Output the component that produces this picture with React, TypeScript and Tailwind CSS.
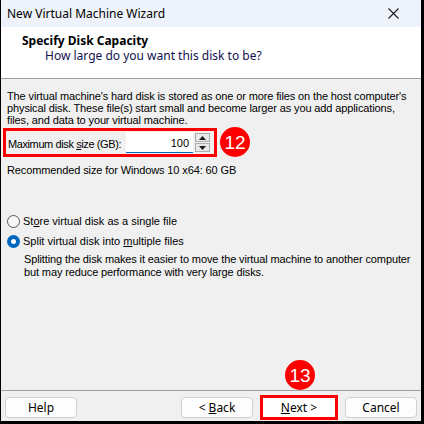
import React from "react";

const ui = { fontFamily: '"Noto Sans", "Open Sans", sans-serif' };
const body = { fontFamily: '"Liberation Sans", Arial, sans-serif' };

function Badge({ n }: { n: string }) {
    return (
        <div
            className="w-[30px] h-[30px] rounded-full bg-[#ff0000] text-white flex items-center justify-center text-[19px] leading-none"
            style={{ fontFamily: '"Liberation Sans", Arial, sans-serif' }}
        >
            {n}
        </div>
    );
}

function Radio({ checked }: { checked?: boolean }) {
    if (checked) {
        return (
            <span className="w-[13px] h-[13px] rounded-full bg-[#0067c0] flex items-center justify-center">
                <span className="w-[5px] h-[5px] rounded-full bg-white" />
            </span>
        );
    }
    return <span className="w-[13px] h-[13px] rounded-full border border-[#5a5a5a] bg-[#f7f7f7]" />;
}

function Button({ children }: { children: React.ReactNode }) {
    return (
        <button
            className="w-[72px] h-[21px] rounded-[4px] border border-[#cfcfcf] bg-[#fdfdfd] text-[12px] leading-none text-black flex items-center justify-center"
            style={ui}
        >
            {children}
        </button>
    );
}

export default function App() {
    return (
        <div className="relative w-[424px] h-[424px] bg-black flex flex-col border-l border-r-[3px] border-b-[3px] border-black">
            {/* title bar */}
            <div className="h-[27px] bg-[#eef2fa] flex items-center justify-between pl-[6px] pr-[22px]">
                <span className="text-[12px] text-black" style={ui}>
                    New Virtual Machine Wizard
                </span>
                <svg width="11" height="11" viewBox="0 0 11 11">
                    <path d="M0.5 0.5 L10.5 10.5 M10.5 0.5 L0.5 10.5" stroke="#1a1a1a" strokeWidth="1.1" />
                </svg>
            </div>

            {/* header */}
            <div className="h-[52px] bg-white border-b border-[#a0a0a0] pl-[21px] pt-[6px]">
                <div className="text-[12px] font-bold leading-[15px] text-black" style={ui}>
                    Specify Disk Capacity
                </div>
                <div className="text-[12px] leading-[15px] text-[#111150] pl-[23px]" style={ui}>
                    How large do you want this disk to be?
                </div>
            </div>

            {/* body */}
            <div className="flex-1 bg-[#f0f0f0] text-[11px] leading-[12px] text-black whitespace-nowrap" style={body}>
                <p className="pl-[6px] pt-[11px] tracking-[-0.12px]">
                    The virtual machine's hard disk is stored as one or more files on the host computer's
                    <br />
                    physical disk. These file(s) start small and become larger as you add applications,
                    <br />
                    files, and data to your virtual machine.
                </p>

                <div className="flex items-center mt-[1px] ml-[2px]">
                    <div className="w-[214px] h-[29px] border-[3px] border-[#ff0000] flex items-center pl-[2px] pr-[4px]">
                        <span className="pt-[3px] shrink-0 tracking-[-0.4px]">
                            Maximum disk <span className="underline">s</span>ize (GB):
                        </span>
                        <div className="ml-auto flex items-center gap-[2px] pt-[1px]">
                            <div className="w-[67px] h-[21px] bg-white border-b border-[#0067c0] flex items-center justify-end pr-[4px] pt-[2px]">
                                100
                            </div>
                            <div className="flex flex-col gap-[1px]">
                                <div className="w-[15px] h-[9px] bg-[#e8e8e8] border border-[#acacac] flex items-center justify-center">
                                    <svg width="7" height="4" viewBox="0 0 7 4">
                                        <path d="M0 4 L3.5 0 L7 4 Z" fill="#1a1a1a" />
                                    </svg>
                                </div>
                                <div className="w-[15px] h-[9px] bg-[#e8e8e8] border border-[#acacac] flex items-center justify-center">
                                    <svg width="7" height="4" viewBox="0 0 7 4">
                                        <path d="M0 0 L3.5 4 L7 0 Z" fill="#1a1a1a" />
                                    </svg>
                                </div>
                            </div>
                        </div>
                    </div>
                    <div className="ml-[3px]">
                        <Badge n="12" />
                    </div>
                </div>

                <p className="pl-[6px] mt-[7px] tracking-[-0.12px]">Recommended size for Windows 10 x64: 60 GB</p>

                <div className="mt-[38px] pl-[6px] flex flex-col">
                    <label className="flex items-center gap-[3px] h-[14px]">
                        <Radio />
                        <span>
                            St<span className="underline">o</span>re virtual disk as a single file
                        </span>
                    </label>
                    <label className="flex items-center gap-[3px] h-[14px] mt-[6px]">
                        <Radio checked />
                        <span>
                            Split virtual disk into <span className="underline">m</span>ultiple files
                        </span>
                    </label>
                    <p className="pl-[17px] mt-[5px] leading-[13px] tracking-[-0.12px]">
                        Splitting the disk makes it easier to move the virtual machine to another computer
                        <br />
                        but may reduce performance with very large disks.
                    </p>
                </div>
            </div>

            {/* footer */}
            <div className="h-[31px] bg-[#f0f0f0] border-t border-[#a0a0a0] flex items-start pt-[6px] pl-[4px] pr-[4px]">
                <Button>Help</Button>
                <div className="ml-auto flex items-center gap-[7px] -mt-[2px]">
                    <Button>
                        &lt; <span className="underline ml-[3px]">B</span>ack
                    </Button>
                    <div className="border-[3px] border-[#ff0000] bg-white">
                        <div className="w-[72px] h-[19px] bg-white text-[12px] leading-none flex items-center justify-center" style={ui}>
                            <span className="underline">N</span>ext &gt;
                        </div>
                    </div>
                    <Button>Cancel</Button>
                </div>
            </div>

            <div className="absolute left-[284px] top-[360px]">
                <Badge n="13" />
            </div>
        </div>
    );
}
